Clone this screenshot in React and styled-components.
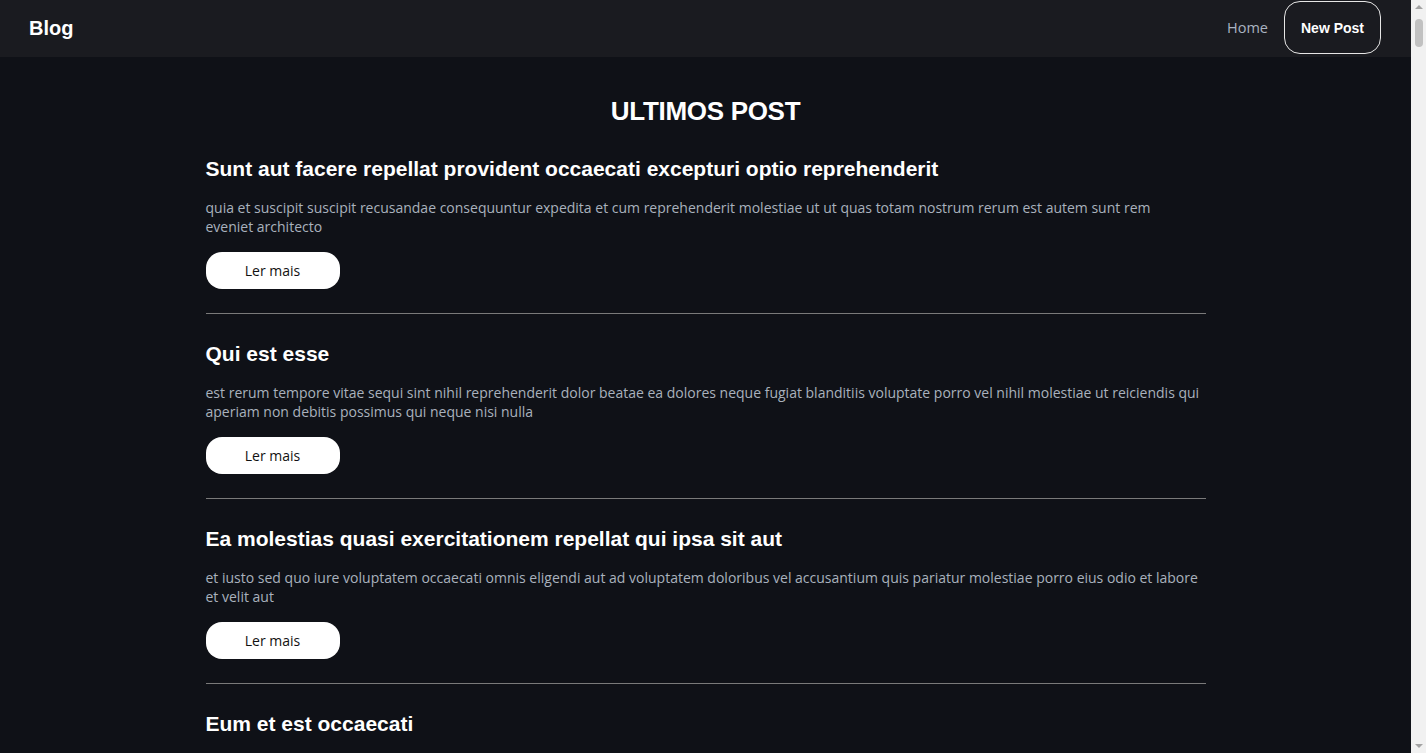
import styled, { createGlobalStyle } from 'styled-components';

const posts = [
  {
    id: 1,
    title: 'Sunt aut facere repellat provident occaecati excepturi optio reprehenderit',
    body: 'quia et suscipit suscipit recusandae consequuntur expedita et cum reprehenderit molestiae ut ut quas totam nostrum rerum est autem sunt rem eveniet architecto',
  },
  {
    id: 2,
    title: 'Qui est esse',
    body: 'est rerum tempore vitae sequi sint nihil reprehenderit dolor beatae ea dolores neque fugiat blanditiis voluptate porro vel nihil molestiae ut reiciendis qui aperiam non debitis possimus qui neque nisi nulla',
  },
  {
    id: 3,
    title: 'Ea molestias quasi exercitationem repellat qui ipsa sit aut',
    body: 'et iusto sed quo iure voluptatem occaecati omnis eligendi aut ad voluptatem doloribus vel accusantium quis pariatur molestiae porro eius odio et labore et velit aut',
  },
  {
    id: 4,
    title: 'Eum et est occaecati',
    body: 'ullam et saepe reiciendis voluptatem adipisci sit amet autem assumenda provident rerum culpa quis hic commodi nesciunt rem tenetur doloremque ipsam iure quis sunt voluptatem rerum illo velit',
  },
  {
    id: 5,
    title: 'Nesciunt quas odio',
    body: 'repudiandae veniam quaerat sunt sed alias aut fugiat sit autem sed est voluptatem omnis possimus esse voluptatibus quis est aut tenetur dolor neque',
  },
];

const App = () => {
  return (
    <>
      <GlobalStyle />
      <StHeader>
        <StLogo>Blog</StLogo>
        <StNav>
          <StNavLink href="#">Home</StNavLink>
          <StNewPost href="#">New Post</StNewPost>
        </StNav>
      </StHeader>
      <StMain>
        <StHeading>ULTIMOS POST</StHeading>
        {posts.map((post) => (
          <StPost key={post.id}>
            <StPostTitle>{post.title}</StPostTitle>
            <StPostBody>{post.body}</StPostBody>
            <StReadMore>Ler mais</StReadMore>
          </StPost>
        ))}
      </StMain>
      {/* the window's scrollbar, as the reference shows it */}
      <StScrollTrack>
        <StScrollArrow />
        <StScrollThumb />
        <StScrollArrow $down />
      </StScrollTrack>
    </>
  );
};

export default App;

const GlobalStyle = createGlobalStyle`
  * {
    box-sizing: border-box;
  }
  body {
    margin: 0;
    padding-right: 15px;
    background: #0f1117;
    color: #fff;
    font-family: 'Liberation Sans', Arial, sans-serif;
  }
`;

const StHeader = styled.header`
  display: flex;
  justify-content: space-between;
  align-items: center;
  height: 57px;
  padding: 0 30px 0 29px;
  background: #1a1b20;
`;

const StLogo = styled.h1`
  margin: 0;
  font-size: 20px;
  font-weight: 700;
  color: #fff;
`;

const StNav = styled.nav`
  display: flex;
  align-items: center;
  gap: 16px;
  align-self: flex-start;
  padding-top: 1px;
`;

const StNavLink = styled.a`
  font-family: 'Open Sans', sans-serif;
  font-size: 14.5px;
  color: #aab3c0;
  text-decoration: none;
`;

const StNewPost = styled.a`
  display: flex;
  align-items: center;
  justify-content: center;
  width: 97px;
  height: 53px;
  border: 1px solid #e6e6e6;
  border-radius: 16px;
  font-size: 14px;
  font-weight: 700;
  color: #fff;
  text-decoration: none;
`;

const StMain = styled.main`
  width: 1000px;
  margin: 0 auto;
  padding-top: 39px;
`;

const StHeading = styled.h2`
  margin: 0 0 31px;
  text-align: center;
  font-size: 26px;
  font-weight: 700;
  line-height: 30px;
  letter-spacing: -0.3px;
`;

const StPost = styled.article`
  padding-bottom: 24px;
  margin-bottom: 28px;
  border-bottom: 1px solid #7a7a7a;
`;

const StPostTitle = styled.h3`
  margin: 0 0 17px;
  font-size: 21px;
  font-weight: 700;
  line-height: 24px;
`;

const StPostBody = styled.p`
  max-width: 996px;
  margin: 0 0 16px;
  font-family: 'Open Sans', sans-serif;
  font-size: 14px;
  line-height: 19px;
  color: #a9b1bd;
`;

const StReadMore = styled.button`
  width: 134px;
  height: 37px;
  border: none;
  border-radius: 16px;
  background: #fff;
  color: #111;
  font-family: 'Open Sans', sans-serif;
  font-size: 14px;
  cursor: pointer;
`;

const StScrollTrack = styled.div`
  position: fixed;
  top: 0;
  right: 0;
  bottom: 0;
  width: 15px;
  display: flex;
  flex-direction: column;
  align-items: center;
  background: #f1f1f1;
`;

const StScrollArrow = styled.div`
  width: 0;
  height: 0;
  margin: ${({ $down }) => ($down ? 'auto 0 5px' : '5px 0 0')};
  border-left: 4px solid transparent;
  border-right: 4px solid transparent;
  border-${({ $down }) => ($down ? 'top' : 'bottom')}: 4px solid #a3a3a3;
`;

const StScrollThumb = styled.div`
  width: 8px;
  height: 28px;
  margin-top: 10px;
  border-radius: 4px;
  background: #c1c1c1;
`;
